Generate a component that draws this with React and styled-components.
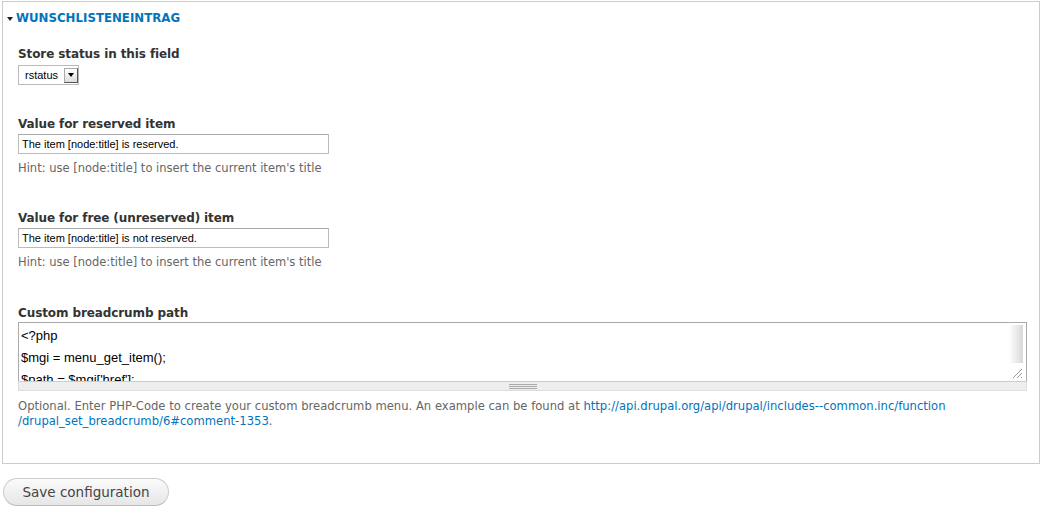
import styled, { createGlobalStyle } from "styled-components";

const Global = createGlobalStyle`
  html, body { margin: 0; padding: 0; background: #fff; }
  body {
    font-family: "DejaVu Sans", Verdana, sans-serif;
    color: #333;
  }
`;

const Page = styled.div`
  padding: 1px 0 0 2px;
  width: 1040px;
  box-sizing: border-box;
`;

const Fieldset = styled.fieldset`
  margin: 0;
  border: 1px solid #ccc;
  padding: 0 0 32px 15px;
  height: 463px;
  box-sizing: border-box;
  min-width: 0;
`;

const Legend = styled.div`
  display: flex;
  align-items: center;
  gap: 3px;
  height: 32px;
  margin-left: -11px;
  color: #0074bd;
  font-size: 11.8px;
  font-weight: bold;
  text-transform: uppercase;
`;

const Caret = styled.span`
  width: 0;
  height: 0;
  border-left: 3.5px solid transparent;
  border-right: 3.5px solid transparent;
  border-top: 4px solid #222;
  margin-top: 1px;
`;

const Item = styled.div`
  margin-top: ${(p) => p.$top || 0}px;
`;

const Label = styled.div`
  font-size: 12px;
  letter-spacing: -0.1px;
  font-weight: bold;
  color: #333;
  line-height: 16px;
  margin-bottom: ${(p) => (p.$tight ? 1 : 2)}px;
`;

const Select = styled.div`
  display: inline-flex;
  align-items: center;
  width: 61px;
  height: 20px;
  box-sizing: border-box;
  border: 1px solid #bbb;
  padding-left: 6px;
  font-family: "Liberation Sans", Arial, sans-serif;
  font-size: 11px;
  color: #000;
  gap: 6px;
`;

const SelectArrow = styled.span`
  width: 14px;
  height: 15px;
  box-sizing: border-box;
  background: linear-gradient(#fff, #ddd);
  border: 1px solid #aaa;
  border-right-color: #555;
  border-bottom-color: #555;
  display: flex;
  align-items: center;
  justify-content: center;
  &::after {
    content: "";
    border-left: 3px solid transparent;
    border-right: 3px solid transparent;
    border-top: 4px solid #000;
  }
`;

const Input = styled.div`
  width: 311px;
  height: 20px;
  box-sizing: border-box;
  border: 1px solid #bbb;
  border-top-color: #aaa;
  display: flex;
  align-items: center;
  padding-left: 3px;
  font-family: "Liberation Sans", Arial, sans-serif;
  font-size: 11px;
  color: #000;
`;

const Hint = styled.div`
  font-size: 11.5px;
  color: #666;
  margin-top: 7px;
  line-height: 14px;
`;

const TextareaWrap = styled.div`
  width: 1009px;
`;

const Textarea = styled.div`
  position: relative;
  height: 59px;
  box-sizing: border-box;
  border: 1px solid #aaa;
  border-bottom: none;
  overflow: hidden;
  padding: 2px 0 0 2px;
  font-family: "Liberation Sans", Arial, sans-serif;
  font-size: 13px;
  line-height: 22px;
  color: #000;
`;

const Scrollbar = styled.div`
  position: absolute;
  right: 3px;
  top: 2px;
  width: 14px;
  height: 38px;
  background: linear-gradient(to right, #fff, #d8d8d8);
`;

const Resizer = styled.svg`
  position: absolute;
  right: 3px;
  bottom: 2px;
`;

const Grippie = styled.div`
  height: 10px;
  box-sizing: border-box;
  background: #eee;
  border: 1px solid #ddd;
  border-top-color: #ccc;
  display: flex;
  align-items: center;
  justify-content: center;
  &::after {
    content: "";
    width: 28px;
    height: 5px;
    background: repeating-linear-gradient(#aaa 0 1px, transparent 1px 2px);
  }
`;

const Description = styled.div`
  font-size: 11.6px;
  color: #666;
  line-height: 15px;
  margin-top: 8px;
  a {
    color: #0074bd;
    text-decoration: none;
  }
`;

const Button = styled.button`
  margin: 14px 0 0 1px;
  width: 166px;
  height: 28px;
  border-radius: 14px;
  border: 1px solid #ccc;
  border-bottom-color: #bbb;
  background: linear-gradient(#fbfbfb, #e6e6e6);
  font-family: "DejaVu Sans", Verdana, sans-serif;
  font-size: 13.5px;
  color: #444;
  padding: 0;
`;

export default function App() {
  return (
    <Page>
      <Global />
      <Fieldset>
        <Legend>
          <Caret />
          Wunschlisteneintrag
        </Legend>
        <Item $top={12}>
          <Label>Store status in this field</Label>
          <Select>
            rstatus
            <SelectArrow />
          </Select>
        </Item>
        <Item $top={31}>
          <Label>Value for reserved item</Label>
          <Input>The item [node:title] is reserved.</Input>
          <Hint>Hint: use [node:title] to insert the current item's title</Hint>
        </Item>
        <Item $top={35}>
          <Label>Value for free (unreserved) item</Label>
          <Input>The item [node:title] is not reserved.</Input>
          <Hint>Hint: use [node:title] to insert the current item's title</Hint>
        </Item>
        <Item $top={36}>
          <Label $tight>Custom breadcrumb path</Label>
          <TextareaWrap>
            <Textarea>
              &lt;?php
              <br />
              $mgi = menu_get_item();
              <br />
              $path = $mgi['href'];
              <Scrollbar />
              <Resizer width="14" height="14" viewBox="0 0 14 14">
                <path d="M13 4 L4 13 M13 8 L8 13 M13 12 L12 13" stroke="#999" strokeWidth="1" />
              </Resizer>
            </Textarea>
            <Grippie />
          </TextareaWrap>
          <Description>
            Optional. Enter PHP-Code to create your custom breadcrumb menu. An example can be found at{" "}
            <a href="#">
              http://api.drupal.org/api/drupal/includes--common.inc/function
              <br />
              /drupal_set_breadcrumb/6#comment-1353
            </a>
            .
          </Description>
        </Item>
      </Fieldset>
      <Button>Save configuration</Button>
    </Page>
  );
}
